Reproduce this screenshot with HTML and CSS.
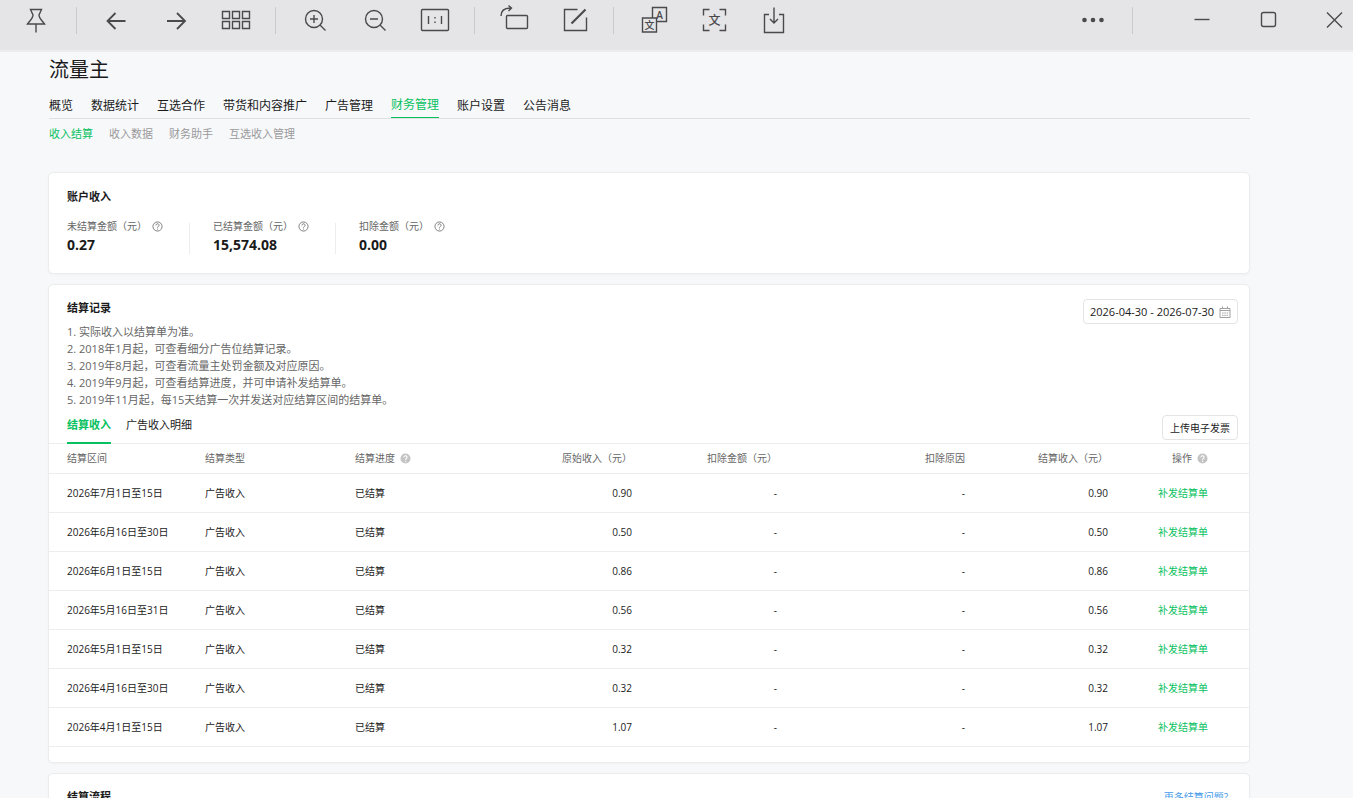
FILE: index.html
```
<!DOCTYPE html>
<html lang="zh-CN">

<head>
    <meta charset="utf-8">
    <title>流量主</title>
    <link rel="stylesheet" href="styles.css">
</head>

<body>
    <header class="toolbar">
        <button class="tool" aria-label="置顶"><svg viewBox="0 0 40 40"><path d="M13.5 9.500h11l-2.500 5.500c0 3 2.500 5 5.500 9h-17c3-4 5.500-6 5.500-9zM19 24v8.500"/></svg></button>
        <span class="divider"></span>
        <button class="tool" aria-label="上一张"><svg viewBox="0 0 40 40"><path class="bold" d="M29.500 21H11.500M19.500 13l-8 8 8 8"/></svg></button>
        <button class="tool" aria-label="下一张"><svg viewBox="0 0 40 40"><path class="bold" d="M11 21h18M21 13l8 8-8 8"/></svg></button>
        <button class="tool" aria-label="缩略图"><svg viewBox="0 0 40 40"><path d="M6.500 11.500h7v7h-7zM16.500 11.500h7v7h-7zM26.500 11.500h7v7h-7zM6.500 21.500h7v7h-7zM16.500 21.500h7v7h-7zM26.500 21.500h7v7h-7z"/></svg></button>
        <span class="divider"></span>
        <button class="tool" aria-label="放大"><svg viewBox="0 0 40 40"><circle cx="19" cy="19" r="8.500"/><path d="M25 25l5.500 5.500M15 19h8M19 15v8"/></svg></button>
        <button class="tool" aria-label="缩小"><svg viewBox="0 0 40 40"><circle cx="19" cy="19" r="8.500"/><path d="M25 25l5.500 5.500M15 19h8"/></svg></button>
        <button class="tool" aria-label="原始大小"><svg viewBox="0 0 40 40"><rect x="6.500" y="9.500" width="27" height="21" rx="1"/><path d="M13.500 16v8M26.500 16v8M20 17v1.500M20 21.500v1.500"/></svg></button>
        <span class="divider"></span>
        <button class="tool" aria-label="旋转"><svg viewBox="0 0 40 40"><rect x="12.500" y="15.500" width="21" height="13" rx="1"/><path d="M7 16c0-5 3-8 10-8M14.500 5.500l3 2.500-3 3"/></svg></button>
        <button class="tool" aria-label="编辑"><svg viewBox="0 0 40 40"><path d="M23.500 9.500h-13v21h22v-13"/><path class="pen" d="M17.500 23.500l14-14"/></svg></button>
        <span class="divider"></span>
        <button class="tool" aria-label="翻译"><svg viewBox="0 0 40 40"><path d="M19.500 17.500v-10h14v14h-10M9.500 18h14v14h-14z"/><text class="glyph latin" x="26.500" y="18.500" font-size="10">A</text><text class="glyph" x="16.500" y="28.500" font-size="10">文</text></svg></button>
        <button class="tool" aria-label="提取文字"><svg viewBox="0 0 40 40"><path d="M10.500 15.500v-6h6M26.500 9.500h6v6M32.500 24.500v6h-6M16.500 30.500h-6v-6"/><text class="glyph" x="21.500" y="24.500" font-size="12">文</text></svg></button>
        <button class="tool" aria-label="保存"><svg viewBox="0 0 40 40"><path d="M16 14.500h-4.500v18h19v-18H26M21 7.500V23M17 19l4 4 4-4"/></svg></button>
        <div class="window-tools">
            <button class="tool" aria-label="更多"><svg viewBox="0 0 40 40"><g class="dots"><circle cx="11.500" cy="20" r="2.300"/><circle cx="20" cy="20" r="2.300"/><circle cx="28.500" cy="20" r="2.300"/></g></svg></button>
            <span class="divider"></span>
            <div class="window-buttons">
                <button class="tool" aria-label="最小化"><svg viewBox="0 0 40 40"><path d="M12.500 19.500h15"/></svg></button>
                <button class="tool" aria-label="最大化"><svg viewBox="0 0 40 40"><rect x="13.500" y="12.500" width="14" height="14" rx="2"/></svg></button>
                <button class="tool" aria-label="关闭"><svg viewBox="0 0 40 40"><path d="M13 12.500l15 15M28 12.500l-15 15"/></svg></button>
            </div>
        </div>
    </header>

    <svg class="symbols" aria-hidden="true">
        <symbol id="help" viewBox="0 0 12 12">
            <circle cx="6" cy="6" r="5" fill="none" stroke="currentColor"/>
            <path d="M4.300 4.800a1.700 1.700 0 1 1 2.500 1.400c-.6.400-.8.600-.8 1.200" fill="none" stroke="currentColor"/>
            <circle cx="6" cy="8.700" r=".6" fill="currentColor"/>
        </symbol>
        <symbol id="help-solid" viewBox="0 0 12 12">
            <circle cx="6" cy="6" r="5.500" fill="currentColor"/>
            <path d="M4.300 4.800a1.700 1.700 0 1 1 2.500 1.400c-.6.400-.8.600-.8 1.200" fill="none" stroke="#fff" stroke-width="1.200"/>
            <circle cx="6" cy="8.900" r=".7" fill="#fff"/>
        </symbol>
    </svg>

    <main class="page">
        <h1>流量主</h1>
        <nav class="nav">
            <a href="#">概览</a>
            <a href="#">数据统计</a>
            <a href="#">互选合作</a>
            <a href="#">带货和内容推广</a>
            <a href="#">广告管理</a>
            <a href="#" class="active">财务管理</a>
            <a href="#">账户设置</a>
            <a href="#">公告消息</a>
        </nav>
        <nav class="subnav">
            <a href="#" class="active">收入结算</a>
            <a href="#">收入数据</a>
            <a href="#">财务助手</a>
            <a href="#">互选收入管理</a>
        </nav>

        <section class="card income">
            <h2>账户收入</h2>
            <div class="stats">
                <div class="stat">
                    <div class="stat-label">未结算金额（元）<svg class="help"><use href="#help"/></svg></div>
                    <div class="stat-value">0.27</div>
                </div>
                <div class="stat">
                    <div class="stat-label">已结算金额（元）<svg class="help"><use href="#help"/></svg></div>
                    <div class="stat-value">15,574.08</div>
                </div>
                <div class="stat">
                    <div class="stat-label">扣除金额（元）<svg class="help"><use href="#help"/></svg></div>
                    <div class="stat-value">0.00</div>
                </div>
            </div>
        </section>

        <section class="card records">
            <div class="records-head">
                <div>
                    <h2>结算记录</h2>
                    <div class="notes">
                        <p>1. 实际收入以结算单为准。</p>
                        <p>2. 2018年1月起，可查看细分广告位结算记录。</p>
                        <p>3. 2019年8月起，可查看流量主处罚金额及对应原因。</p>
                        <p>4. 2019年9月起，可查看结算进度，并可申请补发结算单。</p>
                        <p>5. 2019年11月起，每15天结算一次并发送对应结算区间的结算单。</p>
                    </div>
                </div>
                <label class="date-range">
                    <input type="text" value="2026-04-30 - 2026-07-30" aria-label="日期范围">
                    <svg viewBox="0 0 12 12"><path d="M1 2.500h10v9H1zM1 4.500h10M3.500.5v2M8.500.5v2"/><path d="M3 7h1.500M5.300 7h1.500M7.600 7h1.500M3 9.300h1.500M5.300 9.300h1.500M7.600 9.300h1.500"/></svg>
                </label>
            </div>
            <div class="tabs">
                <a href="#" class="tab active">结算收入</a>
                <a href="#" class="tab">广告收入明细</a>
                <button class="upload">上传电子发票</button>
            </div>
            <table>
                <colgroup>
                    <col class="col-period">
                    <col class="col-type">
                    <col class="col-status">
                    <col class="col-origin">
                    <col class="col-deduct">
                    <col class="col-reason">
                    <col class="col-income">
                    <col class="col-action">
                </colgroup>
                <thead>
                    <tr>
                        <th>结算区间</th>
                        <th>结算类型</th>
                        <th>结算进度<svg class="help solid"><use href="#help-solid"/></svg></th>
                        <th class="num">原始收入（元）</th>
                        <th class="num">扣除金额（元）</th>
                        <th class="num">扣除原因</th>
                        <th class="num">结算收入（元）</th>
                        <th class="num">操作<svg class="help solid"><use href="#help-solid"/></svg></th>
                    </tr>
                </thead>
                <tbody>
                    <tr><td>2026年7月1日至15日</td><td>广告收入</td><td>已结算</td><td class="num">0.90</td><td class="num">-</td><td class="num">-</td><td class="num">0.90</td><td class="num"><a href="#">补发结算单</a></td></tr>
                    <tr><td>2026年6月16日至30日</td><td>广告收入</td><td>已结算</td><td class="num">0.50</td><td class="num">-</td><td class="num">-</td><td class="num">0.50</td><td class="num"><a href="#">补发结算单</a></td></tr>
                    <tr><td>2026年6月1日至15日</td><td>广告收入</td><td>已结算</td><td class="num">0.86</td><td class="num">-</td><td class="num">-</td><td class="num">0.86</td><td class="num"><a href="#">补发结算单</a></td></tr>
                    <tr><td>2026年5月16日至31日</td><td>广告收入</td><td>已结算</td><td class="num">0.56</td><td class="num">-</td><td class="num">-</td><td class="num">0.56</td><td class="num"><a href="#">补发结算单</a></td></tr>
                    <tr><td>2026年5月1日至15日</td><td>广告收入</td><td>已结算</td><td class="num">0.32</td><td class="num">-</td><td class="num">-</td><td class="num">0.32</td><td class="num"><a href="#">补发结算单</a></td></tr>
                    <tr><td>2026年4月16日至30日</td><td>广告收入</td><td>已结算</td><td class="num">0.32</td><td class="num">-</td><td class="num">-</td><td class="num">0.32</td><td class="num"><a href="#">补发结算单</a></td></tr>
                    <tr><td>2026年4月1日至15日</td><td>广告收入</td><td>已结算</td><td class="num">1.07</td><td class="num">-</td><td class="num">-</td><td class="num">1.07</td><td class="num"><a href="#">补发结算单</a></td></tr>
                </tbody>
            </table>
        </section>

        <section class="card flow">
            <h2>结算流程</h2>
            <a href="#">更多结算问题?</a>
        </section>
    </main>
</body>

</html>
```
FILE: styles.css
```
* {
    box-sizing: border-box;
}

body {
    margin: 0;
    height: 100vh;
    display: flex;
    flex-direction: column;
    background: #f7f8fa;
    color: #1a1a1a;
    font-family: "Open Sans", "Noto Sans CJK SC", sans-serif;
    font-size: 10px;
    line-height: 16px;
}

h1, h2, p {
    margin: 0;
}

a {
    color: inherit;
    text-decoration: none;
}

button, input {
    font: inherit;
    color: inherit;
}

.symbols {
    display: none;
}

/* viewer toolbar */
.toolbar {
    flex: none;
    display: flex;
    align-items: flex-start;
    gap: 20px;
    height: 52px;
    padding-left: 17px;
    background: #e5e5e7;
    border-bottom: 2px solid #ececee;
}

.tool {
    flex: none;
    width: 40px;
    height: 40px;
    padding: 0;
    border: none;
    background: none;
}

.tool svg {
    display: block;
    width: 40px;
    height: 40px;
    fill: none;
    stroke: #4a4a4c;
    stroke-width: 1.4;
}

.tool .bold {
    stroke-width: 1.8;
}

.tool .pen {
    stroke-width: 2.2;
}

.tool .dots {
    fill: #4a4a4c;
    stroke: none;
}

.tool .glyph {
    fill: #4a4a4c;
    stroke: none;
    font-weight: 500;
    text-anchor: middle;
}

.tool .latin {
    font-weight: 600;
}

.divider {
    flex: none;
    width: 1px;
    height: 27px;
    margin: 7px -1px 0;
    background: #cbcbcd;
}

.window-tools {
    display: flex;
    gap: 20px;
    margin-left: auto;
}

.window-buttons {
    display: flex;
    gap: 26px;
    margin-left: 30px;
    margin-right: -1px;
}

/* page */
.page {
    flex: 1;
    min-height: 0;
    overflow-y: auto;
    scrollbar-width: none;
    padding: 0 103px 24px 48px;
}

h1 {
    padding: 4px 1px 0;
    font-size: 20px;
    font-weight: 400;
    line-height: 28px;
}

.nav {
    display: flex;
    gap: 18px;
    margin: 9px 0 0 1px;
    border-bottom: 1px solid #dfe0e2;
    font-size: 12px;
    line-height: 25px;
}

.nav .active {
    border-bottom: 1px solid #07c160;
    color: #07c160;
    line-height: 24px;
}

.subnav {
    display: flex;
    gap: 16px;
    margin: 7px 0 0 1px;
    color: #9a9a9a;
    font-size: 11px;
}

.subnav .active {
    color: #07c160;
}

.card {
    margin-bottom: 10px;
    background: #fff;
    border: 1px solid #ebecee;
    border-radius: 5px;
    box-shadow: 0 1px 3px rgba(0, 0, 0, 0.03);
}

h2 {
    font-size: 11px;
    font-weight: 700;
    line-height: 16px;
}

.income {
    margin-top: 30px;
    padding: 16px 18px 17px;
}

.stats {
    display: flex;
    margin-top: 13px;
}

.stat {
    position: relative;
    padding-right: 26px;
}

.stat + .stat {
    padding-left: 24px;
}

.stat + .stat::before {
    content: '';
    position: absolute;
    left: 0;
    top: 5px;
    bottom: 2px;
    border-left: 1px solid #ededed;
}

.stat-label {
    display: flex;
    align-items: center;
    gap: 5px;
    color: #666;
}

.help {
    flex: none;
    width: 11px;
    height: 11px;
    color: #777;
}

.help.solid {
    margin-left: 5px;
    color: #c4c4c4;
    vertical-align: -2px;
}

.stat-value {
    font-size: 14px;
    font-weight: 700;
    line-height: 22px;
}

.records {
    padding-bottom: 15px;
}

.records-head {
    display: flex;
    justify-content: space-between;
    align-items: flex-start;
    padding: 14px 11px 0 18px;
}

.records-head h2 {
    margin-top: 1px;
}

.notes {
    margin-top: 7px;
    color: #666;
    font-size: 11px;
    line-height: 17px;
}

.date-range {
    display: flex;
    align-items: center;
    justify-content: space-between;
    width: 155px;
    height: 25px;
    padding: 0 6px;
    border: 1px solid #e4e4e4;
    border-radius: 4px;
}

.date-range input {
    width: 127px;
    padding: 0;
    border: none;
    outline: none;
    background: none;
    font-size: 11px;
}

.date-range svg {
    width: 12px;
    height: 12px;
    fill: none;
    stroke: #a0a0a0;
}

.tabs {
    display: flex;
    align-items: flex-start;
    gap: 15px;
    height: 36px;
    padding: 0 11px 0 18px;
    border-bottom: 1px solid #ededed;
    font-size: 11px;
}

.tab {
    height: 36px;
    padding-top: 9px;
}

.tab.active {
    border-bottom: 2px solid #07c160;
    color: #07c160;
    font-weight: 700;
}

.upload {
    height: 25px;
    margin: 7px 0 0 auto;
    padding: 0 7px;
    border: 1px solid #e4e4e4;
    border-radius: 4px;
    background: #fff;
    font-size: 10px;
}

table {
    width: 100%;
    border-collapse: collapse;
    table-layout: fixed;
}

.col-period { width: 138px; }
.col-type { width: 150px; }
.col-status { width: 150px; }
.col-origin { width: 163px; }
.col-deduct { width: 145px; }
.col-reason { width: 188px; }
.col-income { width: 143px; }
.col-action { width: 123px; }

th, td {
    height: 39px;
    padding: 0 18px;
    border-bottom: 1px solid #ededed;
    text-align: left;
    white-space: nowrap;
}

th {
    height: 29px;
    color: #666;
    font-weight: 400;
}

.num {
    text-align: right;
}

th:last-child, td:last-child {
    padding-right: 41px;
}

td a {
    color: #07c160;
}

.flow {
    display: flex;
    justify-content: space-between;
    padding: 15px 21px 120px 18px;
}

.flow a {
    color: #459ae9;
}
```
